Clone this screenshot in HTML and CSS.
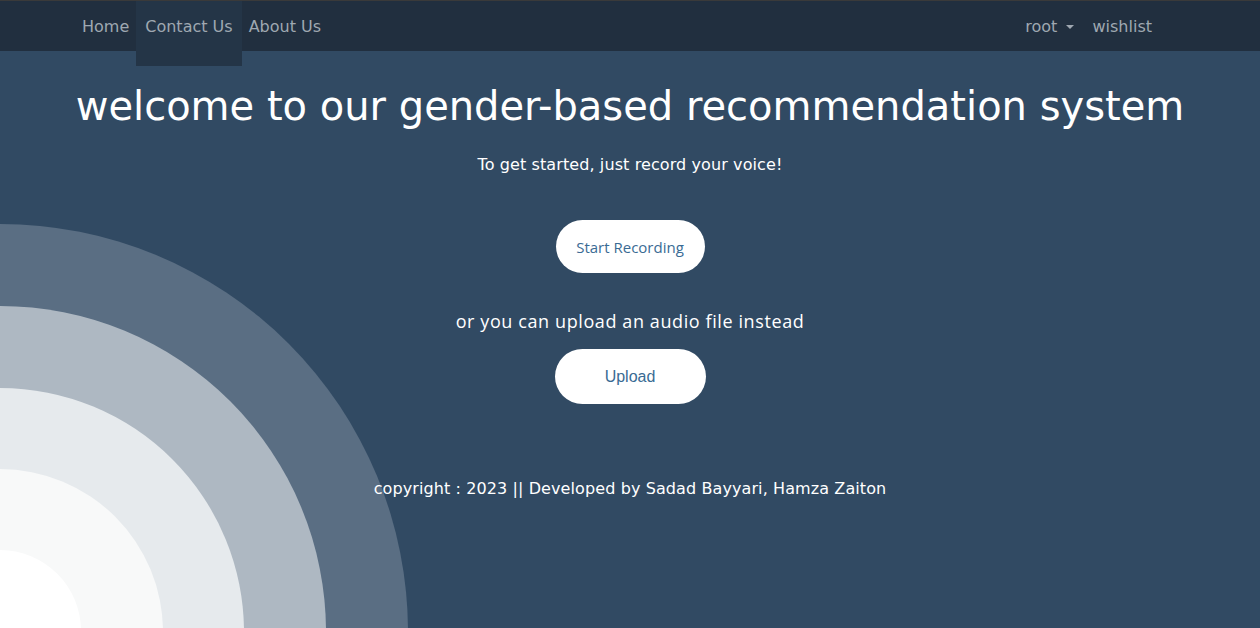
FILE: index.html
```html
<!DOCTYPE html>
<html>
<head>
<meta charset="utf-8">
<link rel="stylesheet" href="styles.css">
</head>
<body>
<div class="bg-rings">
  <div class="ring r1"></div>
  <div class="ring r2"></div>
  <div class="ring r3"></div>
  <div class="ring r4"></div>
  <div class="ring r5"></div>
</div>
<nav class="navbar">
  <div class="nav-left">
    <a class="nav-link">Home</a>
    <a class="nav-link active">Contact Us</a>
    <a class="nav-link">About Us</a>
  </div>
  <div class="nav-right">
    <a class="nav-link dropdown">root <span class="caret"></span></a>
    <a class="nav-link">wishlist</a>
  </div>
</nav>
<main class="content">
  <h1 class="title">welcome to our gender-based recommendation system</h1>
  <p class="lead">To get started, just record your voice!</p>
  <button class="btn btn-record">Start Recording</button>
  <p class="alt">or you can upload an audio file instead</p>
  <button class="btn btn-upload">Upload</button>
  <p class="footer">copyright : 2023 || Developed by Sadad Bayyari, Hamza Zaiton</p>
</main>
</body>
</html>
```
FILE: styles.css
```css
html, body {
  margin: 0;
  padding: 0;
  height: 100%;
}
body {
  background: #314a63;
  font-family: "DejaVu Sans", Verdana, sans-serif;
  color: #fff;
  overflow: hidden;
  position: relative;
}
.bg-rings {
  position: absolute;
  left: 0;
  top: 0;
  width: 100%;
  height: 100%;
  overflow: hidden;
  z-index: 0;
}
.ring {
  position: absolute;
  border-radius: 50%;
}
.r1 { width: 816px; height: 816px; left: -408px; top: 224px; background: #5a6e83; }
.r2 { width: 652px; height: 652px; left: -326px; top: 306px; background: #aeb8c2; }
.r3 { width: 488px; height: 488px; left: -244px; top: 388px; background: #e6eaed; }
.r4 { width: 326px; height: 326px; left: -163px; top: 469px; background: #f8f9f9; }
.r5 { width: 162px; height: 162px; left: -81px; top: 550px; background: #ffffff; }

.navbar {
  position: relative;
  z-index: 1;
  height: 50px;
  background: #212f3f;
  border-top: 1px solid #3a3a3a;
  display: flex;
  justify-content: space-between;
  padding: 0 101px 0 75px;
}
.nav-left, .nav-right {
  display: flex;
  align-items: flex-start;
}
.nav-link {
  font-size: 16px;
  color: #9fa8b1;
  padding: 1px 7px 0;
  height: 49px;
  line-height: 50px;
  white-space: nowrap;
}
.nav-link.active {
  background: #243547;
  height: 64px;
  padding: 1px 9px 0;
}
.nav-link.dropdown {
  padding-right: 11px;
}
.caret {
  display: inline-block;
  width: 0;
  height: 0;
  border-left: 4px solid transparent;
  border-right: 4px solid transparent;
  border-top: 4px solid #9fa8b1;
  vertical-align: middle;
  margin-left: 4px;
  margin-top: -2px;
}
.content {
  position: relative;
  z-index: 1;
  display: flex;
  flex-direction: column;
  align-items: center;
  margin-top: -4px;
}
.title {
  font-weight: normal;
  font-size: 40px;
  margin: 34px 0 0;
  line-height: 50px;
}
.lead {
  font-size: 16px;
  margin: 24px 0 0;
  line-height: 20px;
  letter-spacing: 0.1px;
}
.btn {
  background: #fff;
  border: none;
  border-radius: 28px;
  color: #3a6b94;
  cursor: pointer;
}
.btn-record {
  margin-top: 45px;
  width: 149px;
  height: 53px;
  font-family: "Open Sans", sans-serif;
  font-size: 15px;
}
.alt {
  font-family: "Open Sans", sans-serif;
  font-size: 18px;
  margin: 37px 0 0;
  line-height: 22px;
  letter-spacing: 0.6px;
}
.btn-upload {
  margin-top: 17px;
  width: 151px;
  height: 55px;
  font-family: "Liberation Sans", Arial, sans-serif;
  font-size: 16px;
}
.footer {
  font-size: 16px;
  margin: 75px 0 0;
  line-height: 20px;
  letter-spacing: 0.1px;
}
```
